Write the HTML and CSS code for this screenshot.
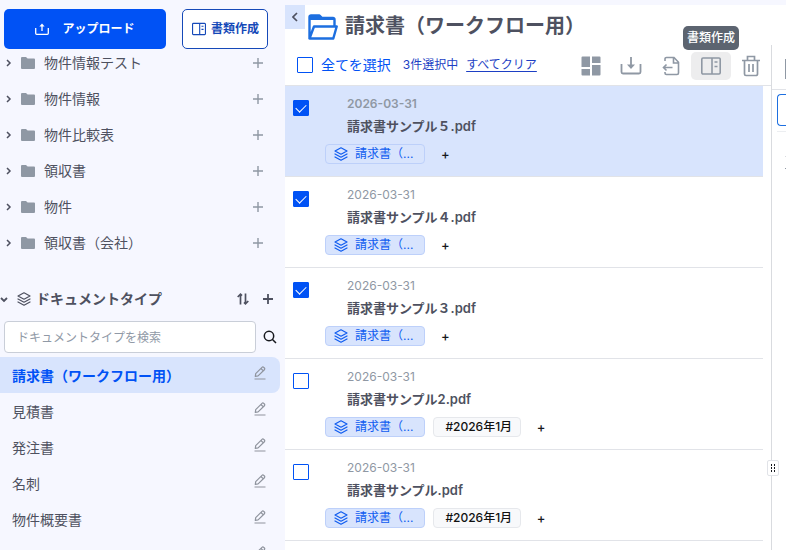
FILE: index.html
```html
<!DOCTYPE html>
<html lang="ja">

<head>
  <meta charset="UTF-8">
  <meta name="viewport" content="width=device-width, initial-scale=1.0">
  <title>請求書（ワークフロー用）</title>

  <link rel="stylesheet" href="styles.css">
</head>

<body>
  <!-- shared icons -->
  <svg class="sprite" aria-hidden="true">
    <symbol id="chevron-right" viewBox="0 0 8 10">
      <path d="M3 2 6 5 3 8" fill="none" stroke="currentColor" stroke-width="1.5" />
    </symbol>
    <symbol id="folder" viewBox="0 0 14 12">
      <path d="M1 0h4l1.600 1.500H13a1 1 0 0 1 1 1V11a1 1 0 0 1-1 1H1a1 1 0 0 1-1-1V1a1 1 0 0 1 1-1z" fill="currentColor" />
    </symbol>
    <symbol id="plus" viewBox="0 0 10 10">
      <path d="M5 0v10M0 5h10" fill="none" stroke="currentColor" stroke-width="1.4" />
    </symbol>
    <symbol id="layers" viewBox="0 0 14 14">
      <path d="M7 .8 13 4 7 7.200 1 4zM1 7l6 3.200L13 7M1 10l6 3.200L13 10" fill="none" stroke="currentColor" stroke-width="1.2" stroke-linejoin="round" stroke-linecap="round" />
    </symbol>
    <symbol id="pencil" viewBox="0 0 12 14">
      <path d="M1.300 10.300 1.700 7.600 8 1.300a1.200 1.200 0 0 1 1.700 0l.7.7a1.200 1.200 0 0 1 0 1.700L4.100 9.900zM7 2.500l2.300 2.300M.5 13h11" fill="none" stroke="currentColor" stroke-width="1.2" stroke-linejoin="round" />
    </symbol>
    <symbol id="columns" viewBox="0 0 22 20">
      <path d="M3 2h16a1.200 1.200 0 0 1 1.200 1.200v13.600A1.200 1.200 0 0 1 19 18H3a1.200 1.200 0 0 1-1.200-1.200V3.200A1.200 1.200 0 0 1 3 2zM12 2v16M14.500 6h3M14.500 10.500h3" fill="none" stroke="currentColor" stroke-width="1.6" />
    </symbol>
  </svg>

  <aside class="sidebar">
    <div class="sidebar-actions">
      <button class="btn btn-primary">
        <svg width="14" height="12" viewBox="0 0 14 12"><path d="M.7 5v5.300a1 1 0 0 0 1 1h10.600a1 1 0 0 0 1-1V5M7 8V2" fill="none" stroke="currentColor" stroke-width="1.3" /><path d="M4.400 3.600 7 .6l2.600 3z" fill="currentColor" /></svg>
        アップロード
      </button>
      <button class="btn btn-outline">
        <svg width="16" height="14"><use href="#columns" /></svg>
        書類作成
      </button>
    </div>

    <ul class="folders">
      <li>
        <svg class="chevron"><use href="#chevron-right" /></svg>
        <svg class="folder"><use href="#folder" /></svg>
        <a href="#">物件情報テスト</a>
        <button class="icon-btn" aria-label="追加"><svg class="plus"><use href="#plus" /></svg></button>
      </li>
      <li>
        <svg class="chevron"><use href="#chevron-right" /></svg>
        <svg class="folder"><use href="#folder" /></svg>
        <a href="#">物件情報</a>
        <button class="icon-btn" aria-label="追加"><svg class="plus"><use href="#plus" /></svg></button>
      </li>
      <li>
        <svg class="chevron"><use href="#chevron-right" /></svg>
        <svg class="folder"><use href="#folder" /></svg>
        <a href="#">物件比較表</a>
        <button class="icon-btn" aria-label="追加"><svg class="plus"><use href="#plus" /></svg></button>
      </li>
      <li>
        <svg class="chevron"><use href="#chevron-right" /></svg>
        <svg class="folder"><use href="#folder" /></svg>
        <a href="#">領収書</a>
        <button class="icon-btn" aria-label="追加"><svg class="plus"><use href="#plus" /></svg></button>
      </li>
      <li>
        <svg class="chevron"><use href="#chevron-right" /></svg>
        <svg class="folder"><use href="#folder" /></svg>
        <a href="#">物件</a>
        <button class="icon-btn" aria-label="追加"><svg class="plus"><use href="#plus" /></svg></button>
      </li>
      <li>
        <svg class="chevron"><use href="#chevron-right" /></svg>
        <svg class="folder"><use href="#folder" /></svg>
        <a href="#">領収書（会社）</a>
        <button class="icon-btn" aria-label="追加"><svg class="plus"><use href="#plus" /></svg></button>
      </li>
    </ul>

    <div class="types-head">
      <svg width="8" height="8" viewBox="0 0 8 8"><path d="M1 3 4 6l3-3" fill="none" stroke="currentColor" stroke-width="1.8" /></svg>
      <svg class="layers"><use href="#layers" /></svg>
      <h2>ドキュメントタイプ</h2>
      <button class="icon-btn" aria-label="並べ替え"><svg width="12" height="12" viewBox="0 0 12 12"><path d="M3.500 11.500V1.500M.7 4 3.500 1.200 5 2.700M8.500.5v10M11.300 8 8.500 10.800 7 9.300" fill="none" stroke="currentColor" stroke-width="1.7" /></svg></button>
      <button class="icon-btn" aria-label="追加"><svg width="10" height="10" viewBox="0 0 10 10"><path d="M5 0v10M0 5h10" stroke="currentColor" stroke-width="1.8" /></svg></button>
    </div>

    <div class="search">
      <input type="text" placeholder="ドキュメントタイプを検索" aria-label="ドキュメントタイプを検索">
      <button class="icon-btn" aria-label="検索"><svg width="14" height="14" viewBox="0 0 14 14"><path d="M9.500 9.500 13 13M10.700 6A4.700 4.700 0 1 1 1.300 6a4.700 4.700 0 0 1 9.400 0z" fill="none" stroke="currentColor" stroke-width="1.5" /></svg></button>
    </div>

    <ul class="types">
      <li class="active"><a href="#">請求書（ワークフロー用）</a><button class="icon-btn" aria-label="編集"><svg class="pencil"><use href="#pencil" /></svg></button></li>
      <li><a href="#">見積書</a><button class="icon-btn" aria-label="編集"><svg class="pencil"><use href="#pencil" /></svg></button></li>
      <li><a href="#">発注書</a><button class="icon-btn" aria-label="編集"><svg class="pencil"><use href="#pencil" /></svg></button></li>
      <li><a href="#">名刺</a><button class="icon-btn" aria-label="編集"><svg class="pencil"><use href="#pencil" /></svg></button></li>
      <li><a href="#">物件概要書</a><button class="icon-btn" aria-label="編集"><svg class="pencil"><use href="#pencil" /></svg></button></li>
      <li><button class="icon-btn" aria-label="編集"><svg class="pencil"><use href="#pencil" /></svg></button></li>
    </ul>
  </aside>

  <main>
    <header class="title-bar">
      <button class="collapse" aria-label="サイドバーを閉じる"><svg width="6" height="10" viewBox="0 0 6 10"><path d="M5 1 1 5l4 4" fill="none" stroke="currentColor" stroke-width="1.7" /></svg></button>
      <svg class="title-icon" width="30" height="26" viewBox="0 0 30 26"><path d="M1.500 24.500V3A1.500 1.500 0 0 1 3 1.500h8.500L14 4h11a1.500 1.500 0 0 1 1.500 1.500V12M1.500 24.500h23.800L28.700 12.500H6z" fill="none" stroke="currentColor" stroke-width="2.4" stroke-linejoin="round" /><path d="M1 1.500h10.500L14 4.500h12V6H1z" fill="currentColor" /></svg>
      <h1>請求書（ワークフロー用）</h1>
    </header>

    <div class="content">
      <section class="documents">
        <div class="toolbar">
          <label class="select-all"><input type="checkbox">全てを選択</label>
          <span class="count">3件選択中</span>
          <a class="clear" href="#">すべてクリア</a>
          <div class="tools">
            <button class="tool" aria-label="グリッド表示"><svg width="20" height="20" viewBox="0 0 20 20"><path d="M1.500.5H9V11H.5V1.500a1 1 0 0 1 1-1zM11 .5h7.500a1 1 0 0 1 1 1V7H11zM.5 13H9v6.500H1.500a1 1 0 0 1-1-1zM11 9h8.500v9.500a1 1 0 0 1-1 1H11z" fill="currentColor" /></svg></button>
            <button class="tool" aria-label="ダウンロード"><svg width="22" height="18" viewBox="0 0 22 18"><path d="M1.500 7v8A1.500 1.500 0 0 0 3 16.500h16a1.500 1.500 0 0 0 1.500-1.500V7M11 0v9" fill="none" stroke="currentColor" stroke-width="1.8" /><path d="M7 7.500h8L11 12z" fill="currentColor" /></svg></button>
            <button class="tool" aria-label="移動"><svg width="18" height="20" viewBox="0 0 18 20"><path d="M3 5V3a1.500 1.500 0 0 1 1.500-1.500H12l4.500 4.700V17a1.500 1.500 0 0 1-1.500 1.500H4.500A1.500 1.500 0 0 1 3 17v-1M11.500 1.500V7h5M10.500 11.500h-9M4.500 8.500l-3 3 3 3" fill="none" stroke="currentColor" stroke-width="1.6" /></svg></button>
            <button class="tool selected" aria-label="書類作成"><svg width="22" height="20"><use href="#columns" /></svg><span class="tooltip">書類作成</span></button>
            <button class="tool" aria-label="削除"><svg width="18" height="22" viewBox="0 0 18 22"><path d="M0 5.500h18M5.500 5V1.500h7V5M2.500 5.500V19A1.500 1.500 0 0 0 4 20.500h10a1.500 1.500 0 0 0 1.500-1.500V5.500M7 9v8M11 9v8" fill="none" stroke="currentColor" stroke-width="1.7" /></svg></button>
          </div>
        </div>

        <article class="doc current">
          <input type="checkbox" aria-label="請求書サンプル５.pdf" checked>
          <div class="doc-body">
            <time>2026-03-31</time>
            <h3>請求書サンプル５.pdf</h3>
            <div class="tags">
              <a class="tag tag-type" href="#"><svg class="layers"><use href="#layers" /></svg>請求書（...</a>
              <button class="add-tag">+</button>
            </div>
          </div>
        </article>
        <article class="doc">
          <input type="checkbox" aria-label="請求書サンプル４.pdf" checked>
          <div class="doc-body">
            <time>2026-03-31</time>
            <h3>請求書サンプル４.pdf</h3>
            <div class="tags">
              <a class="tag tag-type" href="#"><svg class="layers"><use href="#layers" /></svg>請求書（...</a>
              <button class="add-tag">+</button>
            </div>
          </div>
        </article>
        <article class="doc">
          <input type="checkbox" aria-label="請求書サンプル３.pdf" checked>
          <div class="doc-body">
            <time>2026-03-31</time>
            <h3>請求書サンプル３.pdf</h3>
            <div class="tags">
              <a class="tag tag-type" href="#"><svg class="layers"><use href="#layers" /></svg>請求書（...</a>
              <button class="add-tag">+</button>
            </div>
          </div>
        </article>
        <article class="doc">
          <input type="checkbox" aria-label="請求書サンプル2.pdf">
          <div class="doc-body">
            <time>2026-03-31</time>
            <h3>請求書サンプル2.pdf</h3>
            <div class="tags">
              <a class="tag tag-type" href="#"><svg class="layers"><use href="#layers" /></svg>請求書（...</a>
              <a class="tag" href="#">#2026年1月</a>
              <button class="add-tag">+</button>
            </div>
          </div>
        </article>
        <article class="doc">
          <input type="checkbox" aria-label="請求書サンプル.pdf">
          <div class="doc-body">
            <time>2026-03-31</time>
            <h3>請求書サンプル.pdf</h3>
            <div class="tags">
              <a class="tag tag-type" href="#"><svg class="layers"><use href="#layers" /></svg>請求書（...</a>
              <a class="tag" href="#">#2026年1月</a>
              <button class="add-tag">+</button>
            </div>
          </div>
        </article>
      </section>

      <aside class="detail">
        <div class="detail-head"><span></span></div>
        <div class="detail-box"></div>
        <div class="detail-line"></div>
        <div class="detail-rule"></div>
        <button class="handle" aria-label="幅を変更"><svg width="4" height="8" viewBox="0 0 4 8"><path d="M0 0h1v2H0zM3 0h1v2H3zM0 3h1v2H0zM3 3h1v2H3zM0 6h1v2H0zM3 6h1v2H3z" fill="currentColor" /></svg></button>
      </aside>
    </div>
  </main>
</body>

</html>
```
FILE: styles.css
```css
* {
  box-sizing: border-box;
}

body {
  background: #f6f7ff;
  color: #4e5160;
  display: flex;
  font-family: Inter, "Noto Sans CJK JP", sans-serif;
  font-size: 14px;
  height: 100vh;
  line-height: 20px;
  margin: 0;
  overflow: hidden;
}

h1,
h2,
h3,
ul {
  margin: 0;
  padding: 0;
}

a {
  color: inherit;
  text-decoration: none;
}

button {
  background: none;
  border: 0;
  color: inherit;
  cursor: pointer;
  font: inherit;
  padding: 0;
}

svg {
  display: block;
  flex: none;
}

.sprite {
  display: none;
}

.icon-btn {
  display: flex;
  flex: none;
}

/* sidebar */
.sidebar {
  flex: 0 0 285px;
  overflow: hidden;
  padding-top: 9px;
}

.sidebar-actions {
  display: flex;
  gap: 16px;
  padding: 0 17px 0 4px;
}

.btn {
  align-items: center;
  border-radius: 5px;
  display: flex;
  font-size: 12px;
  font-weight: 700;
  height: 40px;
  justify-content: center;
}

.btn-primary {
  background: #0052f5;
  color: #fff;
  flex: 1;
  gap: 13px;
}

.btn-outline {
  background: #fff;
  border: 1px solid #1549b8;
  color: #1549b8;
  gap: 4px;
  width: 86px;
}

.folders li,
.types li {
  align-items: center;
  display: flex;
  height: 36px;
}

.folders {
  margin-top: -4px;
}

.folders li {
  padding: 0 22px 0 4px;
}

.folders a,
.types a {
  flex: 1;
}

.chevron {
  height: 10px;
  width: 8px;
}

.folder {
  color: #8f98a4;
  height: 12px;
  margin: 0 9px;
  width: 14px;
}

.folders .plus {
  color: #8f98a4;
  height: 10px;
  width: 10px;
}

.types-head {
  align-items: center;
  display: flex;
  height: 36px;
  margin-top: 20px;
  padding-right: 12px;
}

.types-head .layers {
  margin: 0 5px 0 9px;
}

.types-head h2 {
  flex: 1;
  font-size: 14px;
}

.types-head .icon-btn {
  margin-left: 14px;
}

.layers {
  height: 14px;
  width: 14px;
}

.search {
  align-items: center;
  display: flex;
  gap: 7px;
  margin: 4px 8px 4px 4px;
}

.search input {
  background: #fff;
  border: 1px solid #c9ced8;
  border-radius: 4px;
  flex: 1;
  font: inherit;
  font-size: 12px;
  height: 32px;
  min-width: 0;
  padding: 0 12px;
}

.search input::placeholder {
  color: #9099a6;
}

.search .icon-btn {
  color: #16181d;
}

.types li {
  border-radius: 0 8px 8px 0;
  justify-content: flex-end;
  margin-right: 5px;
  padding: 2px 14px 0 12px;
}

.types .active {
  background: #d8e4fd;
  color: #0052f5;
  font-weight: 700;
}

.types .icon-btn {
  color: #8f949e;
  margin-bottom: 6px;
}

.pencil {
  height: 14px;
  width: 12px;
}

/* main column */
main {
  background: #fff;
  display: flex;
  flex: 1;
  flex-direction: column;
  margin-top: 5px;
  min-width: 0;
}

.title-bar {
  display: flex;
  height: 40px;
}

.collapse {
  background: #d8e4fd;
  display: grid;
  height: 24px;
  place-items: center;
  width: 20px;
}

.title-icon {
  color: #1d6fe0;
  margin: 9px 7px 0 3px;
}

h1 {
  font-size: 20px;
  line-height: 42px;
}

.content {
  display: flex;
  flex: 1;
  min-height: 0;
}

.documents {
  flex: 1;
  min-width: 0;
}

.toolbar {
  align-items: center;
  border-bottom: 1px solid #e1e3e8;
  display: flex;
  height: 41px;
  padding-left: 12px;
}

input[type="checkbox"] {
  appearance: none;
  background: #fff;
  border: 1px solid #0052f5;
  border-radius: 1px;
  flex: none;
  height: 16px;
  margin: 0;
  width: 16px;
}

input[type="checkbox"]:checked {
  background: #0052f5;
  display: grid;
  place-items: center;
}

input[type="checkbox"]:checked::before {
  border: solid #fff;
  border-width: 0 0 1px 1px;
  content: "";
  height: 5px;
  margin-bottom: 2px;
  transform: rotate(-45deg);
  width: 9px;
}

.select-all {
  align-items: center;
  color: #0052f5;
  display: flex;
  gap: 8px;
}

.count,
.clear {
  color: #1d3fc4;
  font-size: 12px;
  margin-left: 12px;
}

.clear {
  margin-left: 8px;
  text-decoration: underline;
  text-underline-offset: 2px;
}

.tools {
  color: #8f98a4;
  display: flex;
  margin: 2px 0 0 auto;
}

.tool {
  border-radius: 5px;
  display: grid;
  height: 28px;
  place-items: center;
  position: relative;
  width: 40px;
}

.tool.selected {
  background: #ededee;
}

.tooltip {
  background: #5c6470;
  border-radius: 5px;
  bottom: 30px;
  color: #fff;
  font-size: 12px;
  font-weight: 500;
  left: 50%;
  line-height: 24px;
  padding: 0 4px;
  position: absolute;
  transform: translateX(-50%);
  white-space: nowrap;
}

.doc {
  border-bottom: 1px solid #e1e3e8;
  display: flex;
  gap: 16px;
  height: 91px;
  margin-right: 8px;
  padding: 9px 8px;
}

.doc > input {
  margin-top: 5px;
}

.doc.current {
  background: #d8e4fd;
}

.doc time {
  color: #8f98a4;
  display: block;
  font-size: 12px;
  line-height: 18px;
  padding-left: 22px;
}

.doc.current time {
  font-weight: 600;
}

.doc h3 {
  font-size: 13px;
  font-weight: 600;
  line-height: 26px;
  padding-left: 22px;
}

.tags {
  align-items: center;
  display: flex;
  gap: 8px;
  margin-top: 5px;
}

.tag {
  align-items: center;
  background: #f8f9fb;
  border: 1px solid #e6e8ec;
  border-radius: 4px;
  color: #111;
  display: flex;
  font-size: 12px;
  font-weight: 500;
  height: 20px;
  padding: 0 8px 0 11px;
}

.tag-type {
  background: #d8e4fd;
  border-color: #bdd0fa;
  color: #0f5cf0;
  font-weight: 400;
  gap: 7px;
  padding: 0 11px 0 8px;
}

.add-tag {
  color: #16181d;
  font-size: 13px;
  font-weight: 500;
  width: 24px;
}

/* detail pane, opens to the right */
.detail {
  border-left: 1px solid #d9dbdf;
  flex: 0 0 15px;
  position: relative;
}

.detail-head {
  border-bottom: 1px solid #e1e3e8;
  height: 45px;
  padding: 14px 0 0 13px;
}

.detail-head span {
  background: #8f98a4;
  display: block;
  height: 20px;
}

.detail-box {
  border: 1px solid #1d6fe0;
  border-radius: 4px 0 0 4px;
  border-right: 0;
  height: 32px;
  margin: 4px 0 0 5px;
}

.detail-line {
  border-top: 1px solid #eceef1;
  margin: 5px 0 0 5px;
}

.detail-rule {
  border: solid #d9dbdf;
  border-bottom-color: #8f98a4;
  border-width: 1px 0;
  height: 13px;
  margin: 24px 0 0 13px;
}

.handle {
  background: #fff;
  border: 1px solid #e1e3e8;
  border-radius: 2px;
  bottom: 74px;
  color: #16181d;
  display: grid;
  height: 16px;
  left: -5px;
  place-items: center;
  position: absolute;
  width: 12px;
}
```
